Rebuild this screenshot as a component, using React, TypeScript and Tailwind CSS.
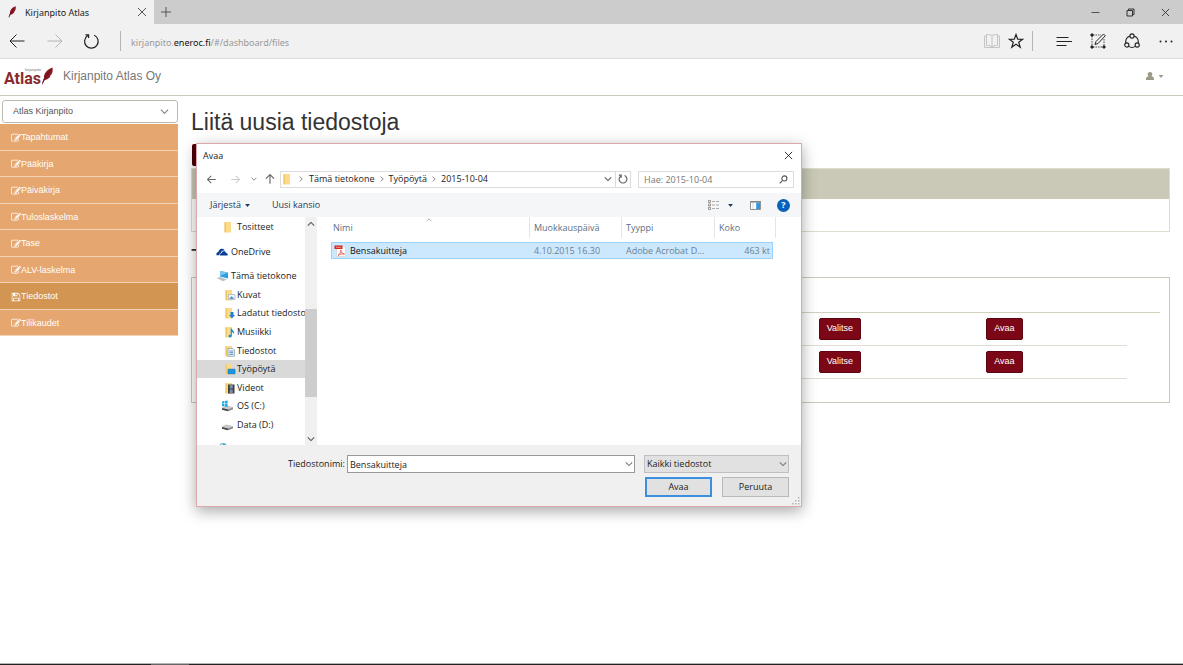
import type { ReactNode } from "react";

function Feather({ className }: { className: string }) {
  return (
    <svg viewBox="0 0 24 36" className={className} aria-hidden="true">
      <path d="M2 35 C3 29 4 26 6 22 C5 13 13 4 23 1 C24 7 23 12 20 16 L18 17 L19 18 C17 22 13 25 8 26 C6 28 4 31 3 35 Z" fill="#8a1622" />
      <path d="M3 33 C7 22 12 13 20 5" fill="none" stroke="#4c0b12" strokeWidth="1.2" />
    </svg>
  );
}

function Chevron({ className, dir = "down" }: { className: string; dir?: "down" | "up" | "right" }) {
  const d = dir === "down" ? "M1 3 L5 7 L9 3" : dir === "up" ? "M1 7 L5 3 L9 7" : "M3 1 L7 5 L3 9";
  return (
    <svg viewBox="0 0 10 10" className={className} fill="none" stroke="currentColor" strokeWidth="1.3" aria-hidden="true">
      <path d={d} />
    </svg>
  );
}

function Caret({ className }: { className: string }) {
  return (
    <svg viewBox="0 0 8 5" className={className} aria-hidden="true">
      <path d="M0 0 H8 L4 5 Z" fill="currentColor" />
    </svg>
  );
}

function Cross({ className }: { className: string }) {
  return (
    <svg viewBox="0 0 10 10" className={className} fill="none" stroke="currentColor" aria-hidden="true">
      <path d="M1 1 L9 9 M9 1 L1 9" />
    </svg>
  );
}

function Arrow({ className, dir }: { className: string; dir: "left" | "right" | "up" }) {
  const d =
    dir === "left"
      ? "M15.5 8 H1 M7.5 1.5 L1 8 L7.5 14.5"
      : dir === "right"
        ? "M0.5 8 H15 M8.5 1.5 L15 8 L8.5 14.5"
        : "M8 15.5 V1 M1.5 7.5 L8 1 L14.5 7.5";
  return (
    <svg viewBox="0 0 16 16" className={className} fill="none" stroke="currentColor" aria-hidden="true">
      <path d={d} />
    </svg>
  );
}

function EditIcon() {
  return (
    <svg viewBox="0 0 1792 1792" className="size-[10px]" fill="currentColor" aria-hidden="true">
      <path d="M888 1184l116-116-152-152-116 116v56h96v96h56zm440-720q-16-16-33 1l-350 350q-17 17-1 33t33-1l350-350q17-17 1-33zm80 594v190q0 119-84.5 203.5t-203.5 84.5h-832q-119 0-203.5-84.5t-84.5-203.5v-832q0-119 84.5-203.5t203.5-84.5h832q63 0 117 25 15 7 18 23 3 17-9 29l-49 49q-14 14-32 8-23-6-45-6h-832q-66 0-113 47t-47 113v832q0 66 47 113t113 47h832q66 0 113-47t47-113v-126q0-13 9-22l64-64q15-15 35-7t20 29zm-96-738l288 288-672 672h-288v-288zm444 132l-92 92-288-288 92-92q28-28 68-28t68 28l152 152q28 28 28 68t-28 68z" />
    </svg>
  );
}

function SaveIcon() {
  return (
    <svg viewBox="0 0 1792 1792" className="size-[10px]" fill="currentColor" aria-hidden="true">
      <path d="M512 1536h768v-384h-768v384zm896 0h128v-896q0-14-10-38.5t-20-34.5l-281-281q-10-10-34-20t-39-10v416q0 40-28 68t-68 28h-576q-40 0-68-28t-28-68v-416h-128v1280h128v-416q0-40 28-68t68-28h832q40 0 68 28t28 68v416zm-384-928v-320q0-13-9.5-22.5t-22.5-9.5h-192q-13 0-22.5 9.5t-9.5 22.5v320q0 13 9.5 22.5t22.5 9.5h192q13 0 22.5-9.5t9.5-22.5zm640 32v928q0 40-28 68t-68 28h-1344q-40 0-68-28t-28-68v-1344q0-40 28-68t68-28h928q40 0 88 20t76 48l280 280q28 28 48 76t20 88z" />
    </svg>
  );
}

function BrowserChrome() {
  return (
    <div className="font-['Noto_Sans','Open_Sans',sans-serif]">
      <div className="flex h-6 bg-[#cccccc] text-[#222]">
        <div className="flex w-[154px] items-center bg-[#f1f1f1] pl-2 pr-[7px]">
          <Feather className="h-3 w-2" />
          <span className="ml-[9px] flex-1 whitespace-nowrap pt-px text-[9px]">Kirjanpito Atlas</span>
          <button aria-label="Close tab" className="text-[#555]"><Cross className="size-[10px]" /></button>
        </div>
        <button aria-label="New tab" className="ml-[7px] text-[#555]">
          <svg viewBox="0 0 10 10" className="size-[10px]" stroke="currentColor"><path d="M5 0 V10 M0 5 H10" /></svg>
        </button>
        <div className="ml-auto flex items-center gap-[26px] pr-[13px] text-[#333]">
          <button aria-label="Minimize"><svg viewBox="0 0 9 9" className="size-[9px]" stroke="#555"><path d="M0.5 4.5 H8.5" /></svg></button>
          <button aria-label="Restore">
            <svg viewBox="0 0 9 9" className="size-[9px]" fill="none" stroke="currentColor"><path d="M1 2.5 H6.5 V8 H1 Z M2.5 2.5 V1 H8 V6.5 H6.5" /></svg>
          </button>
          <button aria-label="Close window"><Cross className="size-[9px]" /></button>
        </div>
      </div>
      <div className="flex h-[35px] items-center border-b border-[#dcdcdc] bg-[#f1f1f1] pl-[9px] pr-[9px] text-[#222]">
        <button aria-label="Back"><Arrow dir="left" className="size-4" /></button>
        <button aria-label="Forward" className="ml-[22px] text-[#b4b4b4]"><Arrow dir="right" className="size-4" /></button>
        <button aria-label="Refresh" className="ml-[20px]">
          <svg viewBox="0 0 17 17" className="size-[17px]" fill="none" stroke="currentColor" strokeWidth="1.2">
            <path d="M11.2 2.2 A6.8 6.8 0 1 1 4.8 2.6 M2.5 1.8 H5.6 V5" />
          </svg>
        </button>
        <div className="ml-5 h-5 w-px bg-[#b5b5b5]" />
        <div className="ml-[10px] flex-1 whitespace-nowrap pt-[3px] text-[9px] text-[#999]">
          kirjanpito.<span className="text-[#111]">eneroc.fi</span>/#/dashboard/files
        </div>
        <button aria-label="Reading view">
          <svg viewBox="0 0 16 16" className="size-4" fill="none" stroke="#c4c4c4"><path d="M8 2.5 C6 1.5 4 1.5 2.5 1.5 V12.5 C4 12.5 6 12.5 8 13.5 C10 12.5 12 12.5 13.5 12.5 V1.5 C12 1.5 10 1.5 8 2.5 V13.5 M2.5 3 H0.5 V14.5 H15.5 V3 H13.5" /></svg>
        </button>
        <button aria-label="Add to favorites" className="ml-2">
          <svg viewBox="0 0 16 16" className="size-4" fill="none" stroke="currentColor" strokeWidth="1.2"><path d="M8 1.5 L9.7 6.2 L14.7 6.3 L10.7 9.3 L12.2 14.2 L8 11.2 L3.8 14.2 L5.3 9.3 L1.3 6.3 L6.3 6.2 Z" /></svg>
        </button>
        <div className="ml-2 h-5 w-px bg-[#b5b5b5]" />
        <button aria-label="Hub" className="ml-[23px]">
          <svg viewBox="0 0 16 16" className="size-4" stroke="currentColor"><path d="M0.5 4.5 H12.5 M0.5 8.5 H16 M0.5 12.5 H10.5" /></svg>
        </button>
        <button aria-label="Web note" className="ml-[18px]">
          <svg viewBox="0 0 16 16" className="size-4" fill="none" stroke="currentColor">
            <path d="M3 2 H11 M2 3 V13 M3 14 H13 M14 6 V13" strokeDasharray="1.5 1" strokeWidth="0.8" />
            <path d="M1 1 h2 v2 h-2z M1 13 h2 v2 h-2z M13 13 h2 v2 h-2z" fill="currentColor" />
            <path d="M5 11.5 L6 8.5 L13.5 1 L15.3 2.8 L8 10.5 Z" />
          </svg>
        </button>
        <button aria-label="Share" className="ml-[18px]">
          <svg viewBox="0 0 16 16" className="size-4" fill="none" stroke="currentColor" strokeWidth="1.1">
            <circle cx="8" cy="3" r="2.1" /><circle cx="2.8" cy="12" r="2.1" /><circle cx="13.2" cy="12" r="2.1" />
            <path d="M5.9 3 A6.5 6.5 0 0 0 1.8 10 M10.1 3 A6.5 6.5 0 0 1 14.2 10 M4.6 13.4 A6.5 6.5 0 0 0 11.4 13.4" />
          </svg>
        </button>
        <button aria-label="More" className="ml-[18px]">
          <svg viewBox="0 0 16 16" className="size-4" fill="currentColor"><circle cx="2.5" cy="8.5" r="1" /><circle cx="8" cy="8.5" r="1" /><circle cx="13.5" cy="8.5" r="1" /></svg>
        </button>
      </div>
    </div>
  );
}

function SiteHeader() {
  return (
    <header className="flex h-[37px] items-center border-b border-[#c9cabb] bg-white pl-1 pr-[19px] pb-[2px] font-['Liberation_Sans',Arial,sans-serif]">
      <a href="#dashboard" className="flex items-center text-[#8a2a2c]">
        <span className="flex w-[37px] flex-col">
          <span className="self-end text-[4px] leading-[4px] text-[#777]">kirjanpito</span>
          <span className="font-['Roboto','Open_Sans',sans-serif] text-[16px] font-bold leading-[13px]">Atlas</span>
        </span>
        <Feather className="h-[18px] w-3" />
      </a>
      <span className="ml-[10px] flex-1 text-[12px] text-[#777]">Kirjanpito Atlas Oy</span>
      <button aria-label="User menu" className="flex items-center gap-1 text-[#9b9b85]">
        <svg viewBox="0 0 8 8" className="size-2" fill="currentColor"><path d="M4 0 C5.7 0 6.3 1 6.3 2.2 C6.3 3.4 5.6 4 5.2 4.3 C6.8 4.6 8 5.2 8 6.6 V8 H0 V6.6 C0 5.2 1.2 4.6 2.8 4.3 C2.4 4 1.7 3.4 1.7 2.2 C1.7 1 2.3 0 4 0 Z" /></svg>
        <Caret className="h-[3px] w-[6px]" />
      </button>
    </header>
  );
}

const menu = ["Tapahtumat", "Pääkirja", "Päiväkirja", "Tuloslaskelma", "Tase", "ALV-laskelma", "Tiedostot", "Tilikaudet"];

function Sidebar() {
  return (
    <aside className="w-[178px] shrink-0 pt-1">
      <div className="relative ml-[2px]">
        <select aria-label="Yritys" className="block h-[23px] w-full appearance-none rounded-[3px] border border-[#bcbcae] bg-white pl-[10px] text-[9px] text-[#555]">
          <option>Atlas Kirjanpito</option>
        </select>
        <Chevron className="pointer-events-none absolute right-[9px] top-[7px] size-[9px] text-[#888]" />
      </div>
      <nav className="mt-px flex h-[212px] flex-col">
        {menu.map((label) => {
          const active = label === "Tiedostot";
          return (
            <a
              key={label}
              href={"#" + label}
              className={`flex flex-1 items-center border-b border-[#f1d3b5] pl-[11px] pt-[2px] text-[9px] text-white ${active ? "bg-[#d29552]" : "bg-[#e5a66f]"}`}
            >
              {active ? <SaveIcon /> : <EditIcon />}
              {label}
            </a>
          );
        })}
      </nav>
    </aside>
  );
}

function RedButton({ children }: { children: ReactNode }) {
  return (
    <button className="block h-[22px] rounded-[2px] border border-[#5d0512] bg-[#7b0717] px-[7px] text-[9px] text-white">{children}</button>
  );
}

function Content() {
  return (
    <main className="min-w-0 flex-1 pl-[13px] pr-[13px] pt-3">
      <h1 className="text-[23px] leading-7 text-[#333]">Liitä uusia tiedostoja</h1>
      <div className="ml-px mt-2 h-[22px] w-16 rounded-[2px] bg-[#4d0008]" />
      <section className="mt-[2px] border border-[#dcdccf]">
        <div className="h-[30px] bg-[#cac9b7]" />
        <div className="h-8" />
      </section>
      <h2 className="mt-3 text-[23px] leading-7 text-[#333]">Tiedostot</h2>
      <section className="mt-[5px] border border-[#c9cabb] px-[9px] pb-[23px]">
        <div className="h-[35px] border-b border-[#d3d0bd]" />
        <table className="w-[calc(100%-33px)] table-fixed border-separate border-spacing-0">
          <colgroup>
            <col className="w-[66.7%]" />
            <col className="w-[18.1%]" />
            <col />
          </colgroup>
          <tbody>
            {[0, 1].map((row) => (
              <tr key={row} className="h-[33px]">
                <td className="border-b border-[#deded2] p-0" />
                <td className="border-b border-[#deded2] p-0"><RedButton>Valitse</RedButton></td>
                <td className="border-b border-[#deded2] p-0"><RedButton>Avaa</RedButton></td>
              </tr>
            ))}
          </tbody>
        </table>
      </section>
    </main>
  );
}

function Folder({ children }: { children?: ReactNode }) {
  return (
    <svg viewBox="0 0 12 12" className="size-3" aria-hidden="true">
      <path d="M1.5 1 H8 V11.5 H1.5 Z" fill="#fbdb8b" />
      <path d="M1.5 1 L3 2 V11.5 L1.5 10.8 Z" fill="#efc763" />
      {children}
    </svg>
  );
}

const cloud = (
  <svg viewBox="0 0 13 10" className="h-[10px] w-3" aria-hidden="true">
    <path d="M0.5 8.5 C0 6 1.5 5 2.5 5 C3 2.5 5 1 7 1.5 C8.5 2 9 2.6 9.5 3.5 C7 3.3 6 4 5.5 5.5 C4 6 3.7 7 3.8 8.5 Z" fill="#0a3f93" />
    <path d="M4.5 8.8 C4 7 5 6.2 6.2 6.2 C6.5 4.5 8 3.8 9.3 4.3 C10.4 4.7 10.7 5.4 10.8 6 C12.5 6 13 7.2 12.5 8.8 Z" fill="#0a3f93" />
  </svg>
);

const computer = (
  <svg viewBox="0 0 13 12" className="h-3 w-[13px]" aria-hidden="true">
    <path d="M4 1 L12 2.5 V8.5 L4 6.5 Z" fill="#2d9fe0" />
    <path d="M4 1 L12 2.5 L4 6 Z" fill="#76c6f0" />
    <path d="M0.5 8 L4 7 L11 9.5 L7 11.3 Z" fill="#b8c2ca" />
  </svg>
);

function Drive({ windows = false }: { windows?: boolean }) {
  return (
    <svg viewBox="0 0 13 12" className="h-3 w-[13px]" aria-hidden="true">
      <path d="M1 7.5 L5 5.5 L12 7 L12 9 L7 11 L1 9.5 Z" fill="#c9c9c9" />
      <path d="M1 8 L7 9.5 V11.2 L1 9.7 Z" fill="#444" />
      <path d="M7 9.5 L12 7.5 V9.2 L7 11.2 Z" fill="#888" />
      {windows && <path d="M1 1.4 L3.2 1 V3.4 H1 Z M3.8 0.9 L6.6 0.5 V3.4 H3.8 Z M1 4 H3.2 V6.4 L1 6 Z M3.8 4 H6.6 V6.9 L3.8 6.5 Z" fill="#18a9e6" />}
    </svg>
  );
}

const thisPc: { label: string; icon: ReactNode }[] = [
  { label: "Kuvat", icon: <Folder><path d="M4.5 5.5 H11 V10.5 H4.5 Z" fill="#eef5fa" stroke="#8fa9bd" strokeWidth="0.6" /><path d="M5.3 9.8 L7.5 7.2 L10.3 9.8 Z" fill="#4a86b4" /></Folder> },
  { label: "Ladatut tiedosto", icon: <Folder><path d="M6.5 5 H9.5 V8 H11 L8 11.5 L5 8 H6.5 Z" fill="#1e83d2" /></Folder> },
  { label: "Musiikki", icon: <Folder><path d="M6.7 2.5 L7.8 2.5 C8 4.5 11 5 10 8.5 C9.7 6.9 8.7 6.3 7.8 6.3 V10 C7.5 11.8 4.3 12 4.5 10 C4.7 8.8 6 8.6 6.7 9 Z" fill="#1590dc" /></Folder> },
  { label: "Tiedostot", icon: <Folder><path d="M4 3.5 H9 L10.5 5 V11.3 H4 Z" fill="#f2f7fa" stroke="#7f97a8" strokeWidth="0.7" /><path d="M5.3 6 H9.3 M5.3 7.7 H9.3 M5.3 9.4 H9.3" stroke="#4b87b1" strokeWidth="0.9" /></Folder> },
  { label: "Työpöytä", icon: <Folder><path d="M4 6.2 H11 V10.8 H4 Z" fill="#1798e5" stroke="#0b68a8" strokeWidth="0.6" /></Folder> },
  { label: "Videot", icon: <Folder><path d="M4 2.5 H10.5 V11.5 H4 Z" fill="#3d3d3d" /><path d="M5.7 3 H8.8 V6.6 H5.7 Z M5.7 7.4 H8.8 V11 H5.7 Z" fill="#7f8da8" /></Folder> },
  { label: "OS (C:)", icon: <Drive windows /> },
  { label: "Data (D:)", icon: <Drive /> },
];

function FolderTree() {
  return (
    <div className="flex w-[120px] shrink-0">
      <div className="flex w-[108px] flex-col overflow-hidden whitespace-nowrap">
        <a href="#tositteet" className="flex h-[19px] shrink-0 items-center gap-[2px] pl-[26px]"><Folder />Tositteet</a>
        <a href="#onedrive" className="mt-[6px] flex h-[19px] shrink-0 items-center gap-[3px] pl-[19px]">{cloud}OneDrive</a>
        <div className="mt-[6px] flex h-[167px] shrink-0 flex-col">
          <a href="#pc" className="flex flex-1 items-center gap-[2px] pl-[19px]">{computer}Tämä tietokone</a>
          {thisPc.map(({ label, icon }) => {
            const drive = label.endsWith(":)");
            return (
              <a
                key={label}
                href={"#" + label}
                className={`flex flex-1 items-center ${drive ? "gap-[3px] pl-6" : "gap-px pl-[27px]"} ${label === "Työpöytä" ? "bg-[#d9d9d9]" : ""}`}
              >
                <span className="shrink-0">{icon}</span>{label}
              </a>
            );
          })}
        </div>
        <svg viewBox="0 0 12 12" className="ml-5 mt-2 size-3 shrink-0" aria-hidden="true">
          <circle cx="6" cy="5" r="4" fill="#4aa9c4" /><path d="M1 4 L6 2" stroke="#cfe6ec" />
        </svg>
      </div>
      <div className="flex w-3 flex-col items-center bg-[#f0f0f0] text-[#555]">
        <Chevron dir="up" className="my-[3px] size-2 shrink-0" />
        <div className="mt-[78px] h-[88px] w-full bg-[#cdcdcd]" />
        <Chevron className="mb-[2px] mt-auto size-2 shrink-0" />
      </div>
    </div>
  );
}

function FileList() {
  const head = "block h-[21px] border-r border-[#e5e5e5] pl-1 leading-[21px]";
  const cell = "border-y border-[#99d1ff] bg-[#cce8ff] text-[#6d7f8e]";
  return (
    <div className="relative flex-1 overflow-hidden bg-white pl-[14px]">
      <Chevron dir="up" className="absolute left-[109px] top-0 size-[6px] text-[#999]" />
      <table className="w-[445px] table-fixed border-separate border-spacing-0 text-left">
        <colgroup>
          <col className="w-[199px]" /><col className="w-[92px]" /><col className="w-[93px]" /><col className="w-[58px]" /><col className="w-[3px]" />
        </colgroup>
        <thead className="text-[#5c6f85]">
          <tr>
            <th className="p-0 pb-1 font-normal"><span className="block h-[21px] border-r border-[#e5e5e5] pl-[2px] leading-[21px]">Nimi</span></th>
            <th className="p-0 pb-1 font-normal"><span className={head}>Muokkauspäivä</span></th>
            <th className="p-0 pb-1 font-normal"><span className={head}>Tyyppi</span></th>
            <th colSpan={2} className="p-0 pb-1 font-normal"><span className={head}>Koko</span></th>
          </tr>
        </thead>
        <tbody>
          <tr className="h-[17px] leading-[15px]">
            <td className="border border-r-0 border-[#99d1ff] bg-[#cce8ff] p-0 text-[#111]">
              <span className="flex items-center gap-1 pl-[2px]">
                <svg viewBox="0 0 12 12" className="size-3" aria-hidden="true">
                  <path d="M2.5 1 H9.5 L11.5 3 V11.5 H2.5 Z" fill="#fff" stroke="#c5c5c5" strokeWidth="0.5" />
                  <path d="M0.5 0.5 H8.5 V4 H0.5 Z" fill="#d9271c" />
                  <path d="M2 2.3 H7" stroke="#f6b5b0" strokeWidth="0.8" />
                  <path d="M4 10.5 C6 9 7 7 6.8 5 C7.2 7.5 8.5 9 10.5 9 C8 8.6 6 9 4 10.5" fill="none" stroke="#df4a3d" strokeWidth="0.8" />
                </svg>
                Bensakuitteja
              </span>
            </td>
            <td className={`${cell} p-0 pl-1`}>4.10.2015 16.30</td>
            <td className={`${cell} p-0 pl-1`}>Adobe Acrobat D...</td>
            <td className={`${cell} border-r p-0 pr-[2px] text-right`}>463 kt</td>
            <td className="p-0" />
          </tr>
        </tbody>
      </table>
    </div>
  );
}

function OpenDialog() {
  return (
    <div role="dialog" aria-label="Avaa" className="absolute left-[196px] top-[143px] w-[606px] border border-[#dba9ab] bg-white text-[9px] leading-[14px] text-[#222] shadow-[0_4px_14px_rgba(0,0,0,0.35)]">
      <div className="flex h-[23px] items-center justify-between pl-[6px] pr-2">
        <span>Avaa</span>
        <button aria-label="Sulje" className="text-[#222]"><Cross className="size-[9px]" /></button>
      </div>
      <div className="flex h-[26px] items-center pb-[2px] pl-[10px] pr-[7px] text-[#666]">
        <button aria-label="Edellinen"><Arrow dir="left" className="size-[9px] stroke-[1.8]" /></button>
        <button aria-label="Seuraava" className="ml-[15px] text-[#ccc]"><Arrow dir="right" className="size-[9px] stroke-[1.8]" /></button>
        <button aria-label="Viimeisimmät" className="ml-[11px]"><Chevron className="size-[6px]" /></button>
        <button aria-label="Ylös" className="ml-2"><Arrow dir="up" className="size-[10px] stroke-[1.8]" /></button>
        <div className="ml-[5px] flex h-[17px] flex-1 items-center border border-[#dcdcdc] pl-px text-[#222]">
          <Folder />
          <Chevron dir="right" className="ml-1 mr-[5px] size-[6px] text-[#666]" />
          <span>Tämä tietokone</span>
          <Chevron dir="right" className="mx-1 size-[6px] text-[#666]" />
          <span>Työpöytä</span>
          <Chevron dir="right" className="mx-1 size-[6px] text-[#666]" />
          <span>2015-10-04</span>
          <Chevron className="ml-auto mr-[3px] size-2 text-[#555]" />
          <button aria-label="Päivitä" className="flex h-full w-[15px] items-center justify-center border-l border-[#dcdcdc]">
            <svg viewBox="0 0 10 10" className="size-[10px]" fill="none" stroke="#666" strokeWidth="1.2"><path d="M6.5 1.5 A3.9 3.9 0 1 1 2.8 1.9 M0.8 1.2 H3.2 V3.8" /></svg>
          </button>
        </div>
        <div className="relative ml-[7px] w-[156px]">
          <input aria-label="Hae" placeholder="Hae: 2015-10-04" className="block h-[17px] w-full border border-[#dcdcdc] pl-[5px] placeholder:text-[#777]" />
          <svg viewBox="0 0 10 10" className="pointer-events-none absolute right-[6px] top-1 size-[9px]" fill="none" stroke="#555" strokeWidth="1.2"><circle cx="6" cy="3.8" r="2.8" /><path d="M4 6 L0.8 9.2" /></svg>
        </div>
      </div>
      <div className="flex h-6 items-center bg-[#f5f6f7] pl-[13px] pr-[11px] text-[#1e395b]">
        <button className="flex items-center gap-1">Järjestä<Caret className="h-[3px] w-[5px]" /></button>
        <button className="ml-[22px]">Uusi kansio</button>
        <button aria-label="Näkymä" className="ml-auto flex items-center gap-2">
          <svg viewBox="0 0 12 10" className="h-[10px] w-3" fill="none"><path d="M0.5 0.5 h2 v2 h-2z M0.5 4 h2 v2 h-2z M0.5 7.5 h2 v2 h-2z" stroke="#8a8178" strokeWidth="0.8" /><path d="M4 1.5 H12 M4 5 H12 M4 8.5 H12" stroke="#999" strokeDasharray="3 1" strokeWidth="0.8" /></svg>
          <Caret className="h-[3px] w-[5px]" />
        </button>
        <button aria-label="Esikatselu" className="ml-[17px]">
          <svg viewBox="0 0 11 9" className="h-[9px] w-[11px]"><path d="M0.5 0.5 H10.5 V8.5 H0.5 Z" fill="#fff" stroke="#777" strokeWidth="0.8" /><path d="M0.5 1 H10.5" stroke="#777" /><path d="M6.2 1.5 H10 V8 H6.2 Z" fill="#3196e2" /><path d="M3 1 V8" stroke="#bbb" strokeWidth="0.6" /></svg>
        </button>
        <button aria-label="Ohje" className="ml-4 flex size-[13px] items-center justify-center rounded-full bg-[#0762bd] text-[9px] font-bold text-white">?</button>
      </div>
      <div className="flex h-[228px]">
        <FolderTree />
        <FileList />
      </div>
      <div className="h-[61px] bg-[#f0f0f0] pl-[91px] pr-3 pt-[10px]">
        <div className="flex items-center">
          <label htmlFor="file-name" className="w-14 whitespace-nowrap">Tiedostonimi:</label>
          <div className="relative ml-[3px] flex-1">
            <input id="file-name" defaultValue="Bensakuitteja" className="block h-[18px] w-full border border-[#999] bg-white pl-[2px]" />
            <Chevron className="pointer-events-none absolute right-[2px] top-[5px] size-2 text-[#777]" />
          </div>
          <div className="relative ml-[9px] w-[145px]">
            <select aria-label="Tiedostotyyppi" className="block h-[18px] w-full appearance-none border border-[#c0c0c0] bg-[#e1e1e1] pl-[2px]">
              <option>Kaikki tiedostot</option>
            </select>
            <Chevron className="pointer-events-none absolute right-[2px] top-[5px] size-2 text-[#777]" />
          </div>
        </div>
        <div className="mt-1 flex justify-end gap-[10px]">
          <button className="h-5 w-[67px] border-2 border-[#3a90dc] bg-[#e1e1e1]">Avaa</button>
          <button className="h-5 w-[67px] border border-[#b8b8b8] bg-[#e1e1e1]">Peruuta</button>
        </div>
      </div>
      <svg viewBox="0 0 8 8" className="absolute bottom-px right-px size-2" fill="#b5b5b5" aria-hidden="true">
        <path d="M6 0 h1.5 v1.5 h-1.5z M6 3 h1.5 v1.5 h-1.5z M6 6 h1.5 v1.5 h-1.5z M3 3 h1.5 v1.5 h-1.5z M3 6 h1.5 v1.5 h-1.5z M0 6 h1.5 v1.5 h-1.5z" />
      </svg>
    </div>
  );
}

export default function App() {
  return (
    <div className="relative flex min-h-screen flex-col overflow-hidden bg-white font-['Open_Sans','Noto_Sans',sans-serif]">
      <BrowserChrome />
      <SiteHeader />
      <div className="flex flex-1 font-['Liberation_Sans',Arial,sans-serif]">
        <Sidebar />
        <Content />
      </div>
      <div className="h-[2px] border-t border-[#b5b5b5] bg-[#222]">
        <div className="ml-[151px] h-px w-[38px] bg-[#666]" />
      </div>
      <OpenDialog />
    </div>
  );
}
